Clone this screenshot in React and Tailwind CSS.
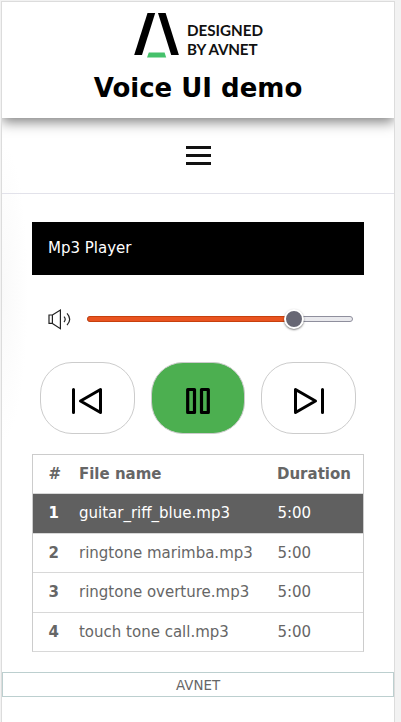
const tracks = [
  { name: 'guitar_riff_blue.mp3', duration: '5:00' },
  { name: 'ringtone marimba.mp3', duration: '5:00' },
  { name: 'ringtone overture.mp3', duration: '5:00' },
  { name: 'touch tone call.mp3', duration: '5:00' },
];

function Logo() {
  return (
    <svg width="160" height="58" viewBox="118 2 160 58" className="block" role="img" aria-label="Designed by Avnet">
      <path d="M147.5 13h7.7l-13.2 42h-7.8z" fill="#000" />
      <path d="M158 13h7.6l13.3 42h-7.7z" fill="#000" />
      <path d="M148.8 52.5h15.8l1.6 5h-19.2z" fill="#45c16b" />
      <g fontFamily="Lato, 'Open Sans', sans-serif" fontWeight="700" fontSize="15.2" fill="#111">
        <text x="187" y="35.6" textLength="76" lengthAdjust="spacing">DESIGNED</text>
        <text x="187" y="55.4" textLength="70.5" lengthAdjust="spacing">BY AVNET</text>
      </g>
    </svg>
  );
}

function Header() {
  return (
    <header className="relative z-10 flex h-[116px] flex-col items-center bg-white shadow-[0_4px_12px_rgba(0,0,0,0.5)] [clip-path:inset(0_0_-20px_0)]">
      <Logo />
      <h1 className="mt-[11px] text-[26px] leading-[34px] font-bold text-black">Voice UI demo</h1>
    </header>
  );
}

function Volume() {
  return (
    <div className="mt-[30px] flex h-7 items-center pl-4">
      <svg width="24" height="22" viewBox="0 0 24 22" fill="none" stroke="#222" strokeWidth="1.2" className="shrink-0">
        <path d="M1 7h3.4v8.4H1zM4.4 7l8-4.9v18.6l-8-5.3" />
        <path d="M16 8.6q2.4 2.6 0 5.4M19 5.4q5.4 5.9 0 11.8" />
      </svg>
      <div className="relative ml-[15px] h-[6px] w-[266px] rounded-full border border-[#8f8f9d] bg-[#e9e9ed]">
        <div className="absolute -top-px -left-px h-[6px] w-[207px] rounded-l-full border border-[#c7400d] bg-[#e95420]" />
        <div className="absolute -top-[8px] left-[196px] size-5 rounded-full border-2 border-white bg-[#676774] shadow-[0_1px_2px_rgba(0,0,0,0.5)]" />
      </div>
    </div>
  );
}

function Controls() {
  const button = 'flex h-[72px] items-center justify-center rounded-[32px] border border-[#ccc] pt-[6px]';
  return (
    <div className="mt-[29px] grid grid-cols-[95px_94px_95px] gap-4 pl-2">
      <button className={button} aria-label="Previous">
        <svg width="32" height="28" viewBox="1 0 32 28" fill="none" stroke="#000" strokeWidth="3" strokeLinecap="round" strokeLinejoin="round">
          <path d="M2.5 2.5v23M29.5 2.5v23L9.5 14z" />
        </svg>
      </button>
      <button className={button + ' bg-[#4caf50]'} aria-label="Pause">
        <svg width="24" height="28" viewBox="0 0 24 28" fill="none" stroke="#000" strokeWidth="3.2" strokeLinejoin="round">
          <path d="M1.7 2.5h6.8v23H1.7zM15.5 2.5h6.8v23h-6.8z" />
        </svg>
      </button>
      <button className={button} aria-label="Next">
        <svg width="32" height="28" viewBox="0 0 32 28" fill="none" stroke="#000" strokeWidth="3" strokeLinecap="round" strokeLinejoin="round">
          <path d="M29.5 2.5v23M2.5 2.5v23L22.5 14z" />
        </svg>
      </button>
    </div>
  );
}

function TrackTable() {
  const cols = 'grid grid-cols-[30.6px_198px_1fr] items-center pl-[15.4px]';
  return (
    <div className="mt-5 border border-[#ccc] border-b-[#d8d8d8] text-[15px] text-[#666]">
      <div className={cols + ' h-[38px] font-bold'}>
        <span>#</span>
        <span>File name</span>
        <span>Duration</span>
      </div>
      {tracks.map((t, i) => (
        <div
          key={t.name}
          className={
            cols + ' border-t border-[#d8d8d8] ' + (i % 2 ? 'h-[39px] ' : 'h-10 ') + (i === 0 ? 'bg-[#606060] text-white' : '')
          }
        >
          <span className="font-bold">{i + 1}</span>
          <span>{t.name}</span>
          <span className="pl-[0.4px]">{t.duration}</span>
        </div>
      ))}
    </div>
  );
}

export default function App() {
  return (
    <div className="h-[722px] w-[401px] overflow-hidden bg-[#f2f2f2] pt-px pl-px font-['DejaVu_Sans',sans-serif]">
      <div className="h-[721px] w-[394px] border-x border-t border-[#dcdcdc] bg-white bg-[radial-gradient(ellipse_26px_150px_at_0_290px,#f9f9f9,#fff)]">
        <Header />
        <nav className="flex h-[76px] justify-center border-b border-[#e2e2ea] pt-7">
          <button className="flex h-[19px] w-[25px] flex-col justify-between" aria-label="Menu">
            <span className="h-[3px] w-full bg-[#111]" />
            <span className="h-[3px] w-full bg-[#111]" />
            <span className="h-[3px] w-full bg-[#111]" />
          </button>
        </nav>
        <main className="px-[30px] pt-7">
          <div className="flex h-[53px] w-[332px] items-center bg-black pl-4 text-[15px] text-white">Mp3 Player</div>
          <Volume />
          <Controls />
          <TrackTable />
        </main>
        <footer className="mt-5 flex h-[25px] items-center justify-center border border-[#bccfcf] pt-[2px] text-[13.4px] leading-5 text-[#666]">
          AVNET
        </footer>
      </div>
    </div>
  );
}
